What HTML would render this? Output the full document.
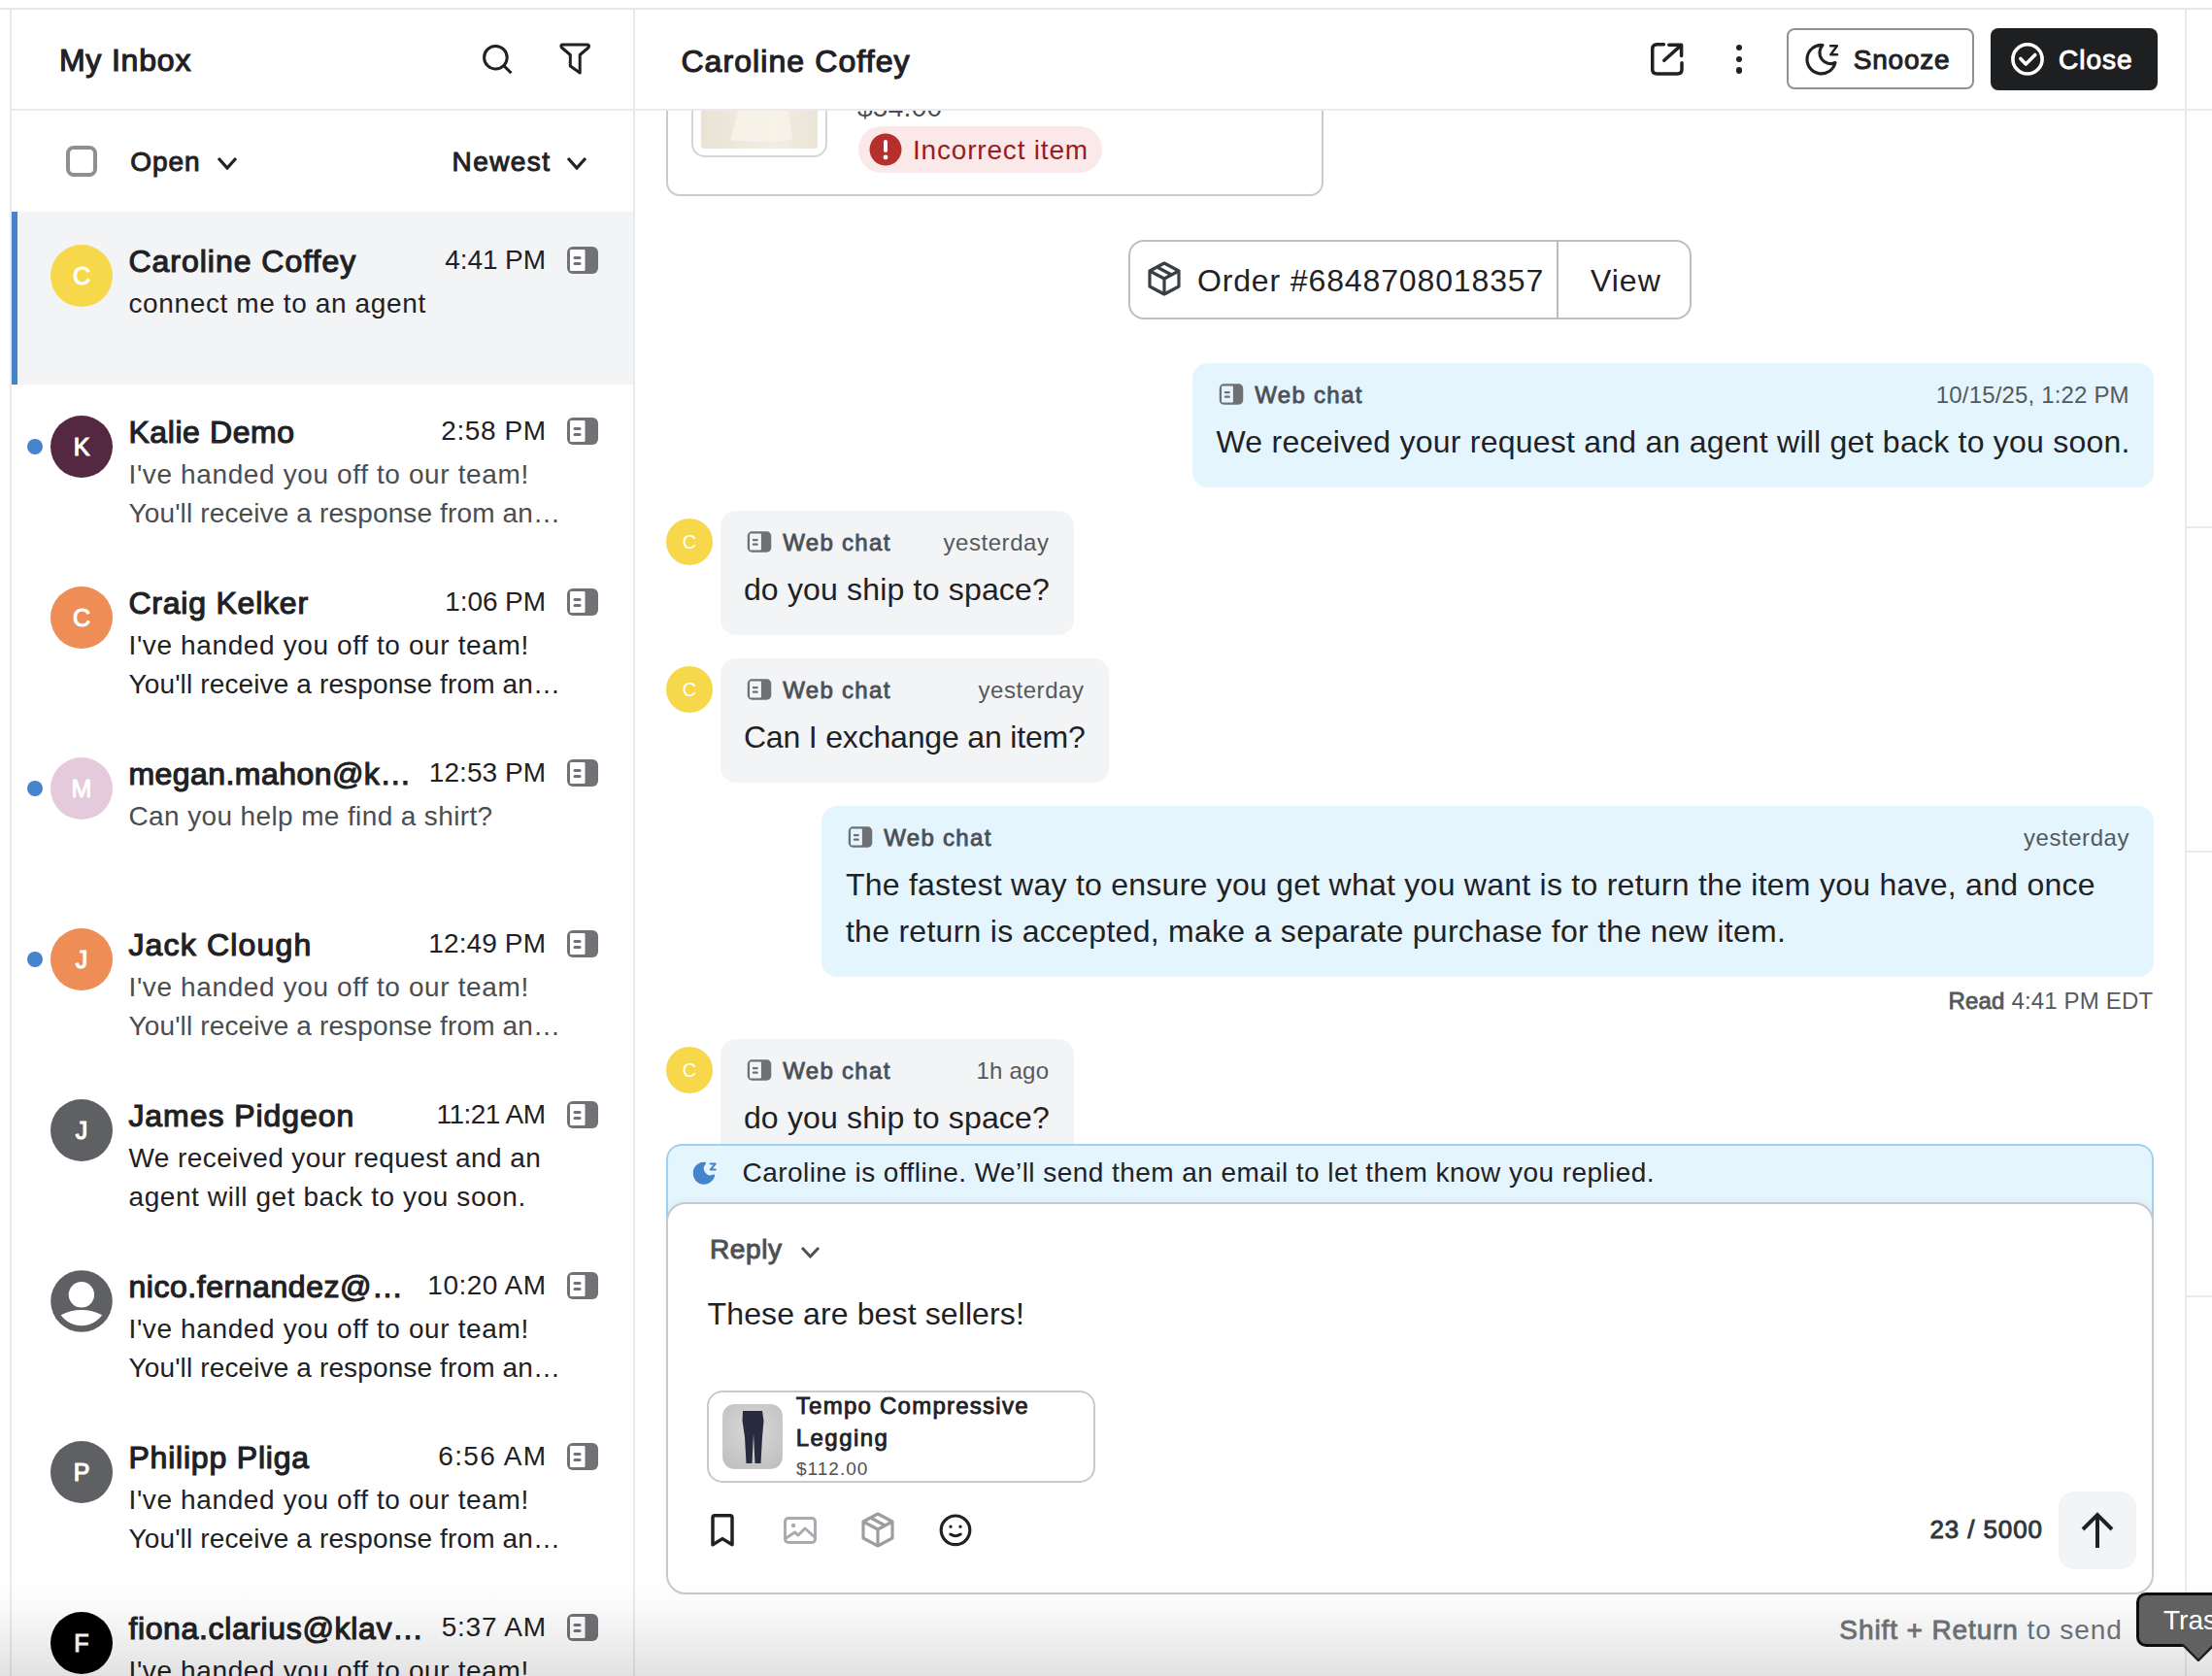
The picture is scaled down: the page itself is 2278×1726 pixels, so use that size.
<!DOCTYPE html>
<html><head><meta charset="utf-8"><style>
html,body{margin:0;padding:0;width:2278px;height:1726px;overflow:hidden;background:#fff;position:relative}
body{font-family:"Liberation Sans",sans-serif}
.a{position:absolute}
.t{position:absolute;white-space:nowrap;line-height:1}
.t b{font-weight:400;-webkit-text-stroke:0.86px currentColor}
.av{width:64px;height:64px;border-radius:50%;color:#fff;font-size:25px;font-weight:400;-webkit-text-stroke:1.1px #fff;text-align:center;line-height:65px}
.av2{width:48px;height:48px;border-radius:50%;background:#f7d84a;color:#fff;font-size:20px;font-weight:400;text-align:center;line-height:48px}
#chat{position:absolute;left:654px;top:114px;width:1596px;height:1612px;overflow:hidden}
#chatin{position:absolute;left:-654px;top:-114px;width:2278px;height:1726px}
</style></head><body>
<div class="a" style="left:0px;top:8px;width:2278px;height:2px;background:#e7e8ea"></div><div class="a" style="left:10px;top:10px;width:2px;height:1716px;background:#e9eaec"></div><div class="a" style="left:652px;top:10px;width:2px;height:1716px;background:#e9eaec"></div><div class="a" style="left:2250px;top:10px;width:2px;height:1716px;background:#e9eaec"></div><div class="a" style="left:12px;top:112px;width:2266px;height:2px;background:#e9eaec"></div><div class="a" style="left:2252px;top:542px;width:26px;height:2px;background:#e9eaec"></div><div class="a" style="left:2252px;top:876px;width:26px;height:2px;background:#e9eaec"></div><div class="a" style="left:2252px;top:1334px;width:26px;height:2px;background:#e9eaec"></div><div class="t" style="left:60.9px;top:45.7px;font-size:32px;font-weight:400;-webkit-text-stroke:1.15px #1f2124;color:#1f2124;letter-spacing:0.813px;">My Inbox</div><svg class="a" style="left:480px;top:35px;" width="60" height="50" viewBox="0 0 60 50"><circle cx="30.4" cy="24.2" r="11.8" fill="none" stroke="#1f2124" stroke-width="3"/><line x1="38.8" y1="32.6" x2="46.5" y2="40.3" stroke="#1f2124" stroke-width="3"/></svg><svg class="a" style="left:570px;top:35px;" width="44" height="50" viewBox="0 0 44 50"><path d="M9 11 H35 Q37.5 11.5 36 14 L27.2 21.5 V40 L17.3 33 V21.5 L8.5 14 Q7 11.5 9 11 Z" fill="none" stroke="#1f2124" stroke-width="3" stroke-linejoin="round"/></svg><div class="a" style="left:68px;top:150px;width:32px;height:32px;box-sizing:border-box;border:4px solid #8e8f91;border-radius:8px"></div><div class="t" style="left:134.3px;top:153.2px;font-size:28px;font-weight:400;-webkit-text-stroke:1.01px #1f2124;color:#1f2124;letter-spacing:0.960px;">Open</div><svg class="a" style="left:223px;top:161px;" width="22" height="14" viewBox="0 0 22 14"><polyline points="2,2 11.0,12 20,2" fill="none" stroke="#1f2124" stroke-width="3.2" stroke-linecap="butt" stroke-linejoin="miter"/></svg><div class="t" style="left:465.5px;top:152.8px;font-size:28px;font-weight:400;-webkit-text-stroke:1.01px #1f2124;color:#1f2124;letter-spacing:1.421px;">Newest</div><svg class="a" style="left:583px;top:161px;" width="22" height="14" viewBox="0 0 22 14"><polyline points="2,2 11.0,12 20,2" fill="none" stroke="#1f2124" stroke-width="3.2" stroke-linecap="butt" stroke-linejoin="miter"/></svg><div class="a" style="left:12px;top:218px;width:640px;height:178px;background:#f3f4f6"></div><div class="a" style="left:12px;top:218px;width:6px;height:178px;background:#4584cc"></div><div class="a av" style="left:52px;top:252px;background:#f7d84a">C</div><div class="t" style="left:132.4px;top:252.6px;font-size:32px;font-weight:400;-webkit-text-stroke:1.15px #1f2124;color:#1f2124;letter-spacing:0.989px;">Caroline Coffey</div><div class="t" style="right:1716.1px;top:254.3px;font-size:28px;font-weight:400;color:#1f2124;letter-spacing:-0.100px;">4:41 PM</div><svg class="a" style="left:583px;top:253px;" width="34" height="30" viewBox="0 0 34 30"><rect x="1" y="1" width="32" height="28" rx="6" fill="#717275"/><rect x="4" y="4" width="15.5" height="22" rx="1" fill="#ffffff"/><rect x="7.5" y="11" width="8" height="3" rx="1.5" fill="#717275"/><rect x="7.5" y="17" width="8" height="3" rx="1.5" fill="#717275"/></svg><div class="t" style="left:132.5px;top:299.1px;font-size:28px;font-weight:400;color:#1f2124;letter-spacing:0.620px;">connect me to an agent</div><div class="a" style="left:28px;top:452px;width:16px;height:16px;background:#4584cc;border-radius:50%"></div><div class="a av" style="left:52px;top:428px;background:#532840">K</div><div class="t" style="left:132.4px;top:428.6px;font-size:32px;font-weight:400;-webkit-text-stroke:1.15px #1f2124;color:#1f2124;letter-spacing:0.590px;">Kalie Demo</div><div class="t" style="right:1715.4px;top:430.3px;font-size:28px;font-weight:400;color:#1f2124;letter-spacing:0.566px;">2:58 PM</div><svg class="a" style="left:583px;top:429px;" width="34" height="30" viewBox="0 0 34 30"><rect x="1" y="1" width="32" height="28" rx="6" fill="#717275"/><rect x="4" y="4" width="15.5" height="22" rx="1" fill="#ffffff"/><rect x="7.5" y="11" width="8" height="3" rx="1.5" fill="#717275"/><rect x="7.5" y="17" width="8" height="3" rx="1.5" fill="#717275"/></svg><div class="t" style="left:132.5px;top:475.1px;font-size:28px;font-weight:400;color:#4c4d50;letter-spacing:0.621px;">I've handed you off to our team!</div><div class="t" style="left:132.5px;top:515.1px;font-size:28px;font-weight:400;color:#4c4d50;letter-spacing:0.132px;">You'll receive a response from an…</div><div class="a av" style="left:52px;top:604px;background:#ee8d55">C</div><div class="t" style="left:132.4px;top:604.6px;font-size:32px;font-weight:400;-webkit-text-stroke:1.15px #1f2124;color:#1f2124;letter-spacing:0.787px;">Craig Kelker</div><div class="t" style="right:1716.1px;top:606.3px;font-size:28px;font-weight:400;color:#1f2124;letter-spacing:-0.100px;">1:06 PM</div><svg class="a" style="left:583px;top:605px;" width="34" height="30" viewBox="0 0 34 30"><rect x="1" y="1" width="32" height="28" rx="6" fill="#717275"/><rect x="4" y="4" width="15.5" height="22" rx="1" fill="#ffffff"/><rect x="7.5" y="11" width="8" height="3" rx="1.5" fill="#717275"/><rect x="7.5" y="17" width="8" height="3" rx="1.5" fill="#717275"/></svg><div class="t" style="left:132.5px;top:651.1px;font-size:28px;font-weight:400;color:#1f2124;letter-spacing:0.621px;">I've handed you off to our team!</div><div class="t" style="left:132.5px;top:691.1px;font-size:28px;font-weight:400;color:#1f2124;letter-spacing:0.132px;">You'll receive a response from an…</div><div class="a" style="left:28px;top:804px;width:16px;height:16px;background:#4584cc;border-radius:50%"></div><div class="a av" style="left:52px;top:780px;background:#e5cadb">M</div><div class="t" style="left:132.4px;top:780.6px;font-size:32px;font-weight:400;-webkit-text-stroke:1.15px #1f2124;color:#1f2124;letter-spacing:0.451px;">megan.mahon@k…</div><div class="t" style="right:1715.9px;top:782.3px;font-size:28px;font-weight:400;color:#1f2124;letter-spacing:0.060px;">12:53 PM</div><svg class="a" style="left:583px;top:781px;" width="34" height="30" viewBox="0 0 34 30"><rect x="1" y="1" width="32" height="28" rx="6" fill="#717275"/><rect x="4" y="4" width="15.5" height="22" rx="1" fill="#ffffff"/><rect x="7.5" y="11" width="8" height="3" rx="1.5" fill="#717275"/><rect x="7.5" y="17" width="8" height="3" rx="1.5" fill="#717275"/></svg><div class="t" style="left:132.5px;top:827.1px;font-size:28px;font-weight:400;color:#4c4d50;letter-spacing:0.374px;">Can you help me find a shirt?</div><div class="a" style="left:28px;top:980px;width:16px;height:16px;background:#4584cc;border-radius:50%"></div><div class="a av" style="left:52px;top:956px;background:#ee8d55">J</div><div class="t" style="left:132.4px;top:956.6px;font-size:32px;font-weight:400;-webkit-text-stroke:1.15px #1f2124;color:#1f2124;letter-spacing:1.183px;">Jack Clough</div><div class="t" style="right:1715.9px;top:958.3px;font-size:28px;font-weight:400;color:#1f2124;letter-spacing:0.117px;">12:49 PM</div><svg class="a" style="left:583px;top:957px;" width="34" height="30" viewBox="0 0 34 30"><rect x="1" y="1" width="32" height="28" rx="6" fill="#717275"/><rect x="4" y="4" width="15.5" height="22" rx="1" fill="#ffffff"/><rect x="7.5" y="11" width="8" height="3" rx="1.5" fill="#717275"/><rect x="7.5" y="17" width="8" height="3" rx="1.5" fill="#717275"/></svg><div class="t" style="left:132.5px;top:1003.1px;font-size:28px;font-weight:400;color:#4c4d50;letter-spacing:0.621px;">I've handed you off to our team!</div><div class="t" style="left:132.5px;top:1043.1px;font-size:28px;font-weight:400;color:#4c4d50;letter-spacing:0.132px;">You'll receive a response from an…</div><div class="a av" style="left:52px;top:1132px;background:#5f6063">J</div><div class="t" style="left:132.4px;top:1132.6px;font-size:32px;font-weight:400;-webkit-text-stroke:1.15px #1f2124;color:#1f2124;letter-spacing:0.945px;">James Pidgeon</div><div class="t" style="right:1716.5px;top:1134.3px;font-size:28px;font-weight:400;color:#1f2124;letter-spacing:-0.536px;">11:21 AM</div><svg class="a" style="left:583px;top:1133px;" width="34" height="30" viewBox="0 0 34 30"><rect x="1" y="1" width="32" height="28" rx="6" fill="#717275"/><rect x="4" y="4" width="15.5" height="22" rx="1" fill="#ffffff"/><rect x="7.5" y="11" width="8" height="3" rx="1.5" fill="#717275"/><rect x="7.5" y="17" width="8" height="3" rx="1.5" fill="#717275"/></svg><div class="t" style="left:132.5px;top:1179.1px;font-size:28px;font-weight:400;color:#1f2124;letter-spacing:0.411px;">We received your request and an</div><div class="t" style="left:132.5px;top:1219.1px;font-size:28px;font-weight:400;color:#1f2124;letter-spacing:0.580px;">agent will get back to you soon.</div><svg class="a" style="left:52px;top:1308px;" width="64" height="64" viewBox="0 0 64 64"><circle cx="32" cy="32" r="31.8" fill="#5f6063"/><circle cx="31.9" cy="25.3" r="13.2" fill="#fff"/><path d="M10.7 46.2 A45.8 45.8 0 0 1 53.1 46.2 A25.8 25.8 0 0 1 10.7 46.2 Z" fill="#fff"/></svg><div class="t" style="left:132.4px;top:1308.6px;font-size:32px;font-weight:400;-webkit-text-stroke:1.15px #1f2124;color:#1f2124;letter-spacing:0.554px;">nico.fernandez@…</div><div class="t" style="right:1715.5px;top:1310.3px;font-size:28px;font-weight:400;color:#1f2124;letter-spacing:0.481px;">10:20 AM</div><svg class="a" style="left:583px;top:1309px;" width="34" height="30" viewBox="0 0 34 30"><rect x="1" y="1" width="32" height="28" rx="6" fill="#717275"/><rect x="4" y="4" width="15.5" height="22" rx="1" fill="#ffffff"/><rect x="7.5" y="11" width="8" height="3" rx="1.5" fill="#717275"/><rect x="7.5" y="17" width="8" height="3" rx="1.5" fill="#717275"/></svg><div class="t" style="left:132.5px;top:1355.1px;font-size:28px;font-weight:400;color:#1f2124;letter-spacing:0.621px;">I've handed you off to our team!</div><div class="t" style="left:132.5px;top:1395.1px;font-size:28px;font-weight:400;color:#1f2124;letter-spacing:0.132px;">You'll receive a response from an…</div><div class="a av" style="left:52px;top:1484px;background:#5f6063">P</div><div class="t" style="left:132.4px;top:1484.6px;font-size:32px;font-weight:400;-webkit-text-stroke:1.15px #1f2124;color:#1f2124;letter-spacing:0.801px;">Philipp Pliga</div><div class="t" style="right:1714.7px;top:1486.3px;font-size:28px;font-weight:400;color:#1f2124;letter-spacing:1.324px;">6:56 AM</div><svg class="a" style="left:583px;top:1485px;" width="34" height="30" viewBox="0 0 34 30"><rect x="1" y="1" width="32" height="28" rx="6" fill="#717275"/><rect x="4" y="4" width="15.5" height="22" rx="1" fill="#ffffff"/><rect x="7.5" y="11" width="8" height="3" rx="1.5" fill="#717275"/><rect x="7.5" y="17" width="8" height="3" rx="1.5" fill="#717275"/></svg><div class="t" style="left:132.5px;top:1531.1px;font-size:28px;font-weight:400;color:#1f2124;letter-spacing:0.621px;">I've handed you off to our team!</div><div class="t" style="left:132.5px;top:1571.1px;font-size:28px;font-weight:400;color:#1f2124;letter-spacing:0.132px;">You'll receive a response from an…</div><div class="a av" style="left:52px;top:1660px;background:#000000">F</div><div class="t" style="left:132.4px;top:1660.6px;font-size:32px;font-weight:400;-webkit-text-stroke:1.15px #1f2124;color:#1f2124;letter-spacing:0.638px;">fiona.clarius@klav…</div><div class="t" style="right:1715.3px;top:1662.3px;font-size:28px;font-weight:400;color:#1f2124;letter-spacing:0.741px;">5:37 AM</div><svg class="a" style="left:583px;top:1661px;" width="34" height="30" viewBox="0 0 34 30"><rect x="1" y="1" width="32" height="28" rx="6" fill="#717275"/><rect x="4" y="4" width="15.5" height="22" rx="1" fill="#ffffff"/><rect x="7.5" y="11" width="8" height="3" rx="1.5" fill="#717275"/><rect x="7.5" y="17" width="8" height="3" rx="1.5" fill="#717275"/></svg><div class="t" style="left:132.5px;top:1707.1px;font-size:28px;font-weight:400;color:#1f2124;letter-spacing:0.621px;">I've handed you off to our team!</div><div class="t" style="left:132.5px;top:1747.1px;font-size:28px;font-weight:400;color:#1f2124;letter-spacing:0.132px;">You'll receive a response from an…</div><div class="t" style="left:701.4px;top:46.9px;font-size:32px;font-weight:400;-webkit-text-stroke:1.15px #1f2124;color:#1f2124;letter-spacing:1.082px;">Caroline Coffey</div>
<div id="chat"><div id="chatin"><div class="a" style="left:686px;top:-40px;width:677px;height:242px;box-sizing:border-box;border:2px solid #c8ccd1;border-radius:14px;background:#fff"></div><div class="a" style="left:712px;top:0px;width:140px;height:162px;box-sizing:border-box;border:2px solid #d3d6d9;border-radius:14px;background:#fff"></div><div class="a" style="left:722px;top:0px;width:120px;height:153px;background:linear-gradient(90deg,#e9e3d6,#f2ede2 60%,#ebe5d8);border-radius:0 0 3px 3px"></div><svg class="a" style="left:722px;top:100px;" width="120" height="53" viewBox="0 0 120 53"><path d="M42 0 H88 L94 44 Q62 48 30 44 Z" fill="#f7f3e8" opacity="0.9"/></svg><div class="t" style="left:883.0px;top:97.3px;font-size:28px;font-weight:400;color:#4c4d50;letter-spacing:0.300px;">$54.00</div><div class="a" style="left:884px;top:130px;width:251px;height:48px;background:#fbe9e9;border-radius:24px"></div><svg class="a" style="left:895px;top:137px;" width="34" height="34" viewBox="0 0 34 34"><circle cx="17" cy="17" r="16.5" fill="#b5302d"/><rect x="15" y="7" width="4" height="13" rx="2" fill="#fff"/><circle cx="17" cy="25" r="2.4" fill="#fff"/></svg><div class="t" style="left:940.0px;top:140.9px;font-size:28px;font-weight:400;color:#9a1d1d;letter-spacing:0.813px;">Incorrect item</div><div class="a" style="left:1162px;top:247px;width:580px;height:82px;box-sizing:border-box;border:2px solid #b9bec4;border-radius:16px;background:#fff"></div><div class="a" style="left:1603px;top:247px;width:2px;height:82px;background:#b9bec4"></div><svg class="a" style="left:1180px;top:268px;" width="38" height="38" viewBox="0 0 38 38"><g fill="none" stroke="#3a3f45" stroke-width="3.2" stroke-linejoin="round"><path d="M19 3 L34 11 V27 L19 35 L4 27 V11 Z"/><path d="M4 11 L19 19 L34 11"/><path d="M19 19 V35"/><path d="M11.5 7 L26.5 15"/></g></svg><div class="t" style="left:1232.9px;top:272.9px;font-size:32px;font-weight:400;color:#1f2124;letter-spacing:0.872px;">Order #6848708018357</div><div class="t" style="left:1637.9px;top:272.9px;font-size:32px;font-weight:400;color:#1f2124;letter-spacing:1.046px;">View</div><div class="a" style="left:1228px;top:374px;width:990px;height:128px;background:#e4f5fd;border-radius:16px"></div><svg class="a" style="left:1255px;top:394px;" width="26" height="24" viewBox="0 0 34 30"><rect x="1" y="1" width="32" height="28" rx="6" fill="#6f7074"/><rect x="4" y="4" width="15.5" height="22" rx="1" fill="#e4f5fd"/><rect x="7.5" y="11" width="8" height="3" rx="1.5" fill="#6f7074"/><rect x="7.5" y="17" width="8" height="3" rx="1.5" fill="#6f7074"/></svg><div class="t" style="left:1292.2px;top:394.7px;font-size:24px;font-weight:400;-webkit-text-stroke:0.86px #4d5054;color:#4d5054;letter-spacing:1.312px;">Web chat</div><div class="t" style="right:85.3px;top:394.7px;font-size:24px;font-weight:400;color:#55595e;letter-spacing:0.162px;">10/15/25, 1:22 PM</div><div class="t" style="left:1252.5px;top:438.9px;font-size:32px;font-weight:400;color:#1f2124;letter-spacing:0.234px;">We received your request and an agent will get back to you soon.</div><div class="a av2" style="left:686px;top:534px">C</div><div class="a" style="left:742px;top:526px;width:364px;height:128px;background:#f3f4f6;border-radius:16px"></div><svg class="a" style="left:769px;top:546px;" width="26" height="24" viewBox="0 0 34 30"><rect x="1" y="1" width="32" height="28" rx="6" fill="#6f7074"/><rect x="4" y="4" width="15.5" height="22" rx="1" fill="#f3f4f6"/><rect x="7.5" y="11" width="8" height="3" rx="1.5" fill="#6f7074"/><rect x="7.5" y="17" width="8" height="3" rx="1.5" fill="#6f7074"/></svg><div class="t" style="left:806.2px;top:546.7px;font-size:24px;font-weight:400;-webkit-text-stroke:0.86px #4d5054;color:#4d5054;letter-spacing:1.312px;">Web chat</div><div class="t" style="right:1197.5px;top:546.7px;font-size:24px;font-weight:400;color:#55595e;letter-spacing:0.547px;">yesterday</div><div class="t" style="left:765.9px;top:590.9px;font-size:32px;font-weight:400;color:#1f2124;letter-spacing:0.180px;">do you ship to space?</div><div class="a av2" style="left:686px;top:686px">C</div><div class="a" style="left:742px;top:678px;width:400px;height:128px;background:#f3f4f6;border-radius:16px"></div><svg class="a" style="left:769px;top:698px;" width="26" height="24" viewBox="0 0 34 30"><rect x="1" y="1" width="32" height="28" rx="6" fill="#6f7074"/><rect x="4" y="4" width="15.5" height="22" rx="1" fill="#f3f4f6"/><rect x="7.5" y="11" width="8" height="3" rx="1.5" fill="#6f7074"/><rect x="7.5" y="17" width="8" height="3" rx="1.5" fill="#6f7074"/></svg><div class="t" style="left:806.2px;top:698.7px;font-size:24px;font-weight:400;-webkit-text-stroke:0.86px #4d5054;color:#4d5054;letter-spacing:1.312px;">Web chat</div><div class="t" style="right:1161.5px;top:698.7px;font-size:24px;font-weight:400;color:#55595e;letter-spacing:0.547px;">yesterday</div><div class="t" style="left:765.9px;top:742.9px;font-size:32px;font-weight:400;color:#1f2124;letter-spacing:-0.176px;">Can I exchange an item?</div><div class="a" style="left:846px;top:830px;width:1372px;height:176px;background:#e4f5fd;border-radius:16px"></div><svg class="a" style="left:873px;top:850px;" width="26" height="24" viewBox="0 0 34 30"><rect x="1" y="1" width="32" height="28" rx="6" fill="#6f7074"/><rect x="4" y="4" width="15.5" height="22" rx="1" fill="#e4f5fd"/><rect x="7.5" y="11" width="8" height="3" rx="1.5" fill="#6f7074"/><rect x="7.5" y="17" width="8" height="3" rx="1.5" fill="#6f7074"/></svg><div class="t" style="left:910.2px;top:850.7px;font-size:24px;font-weight:400;-webkit-text-stroke:0.86px #4d5054;color:#4d5054;letter-spacing:1.312px;">Web chat</div><div class="t" style="right:85.0px;top:850.7px;font-size:24px;font-weight:400;color:#55595e;letter-spacing:0.547px;">yesterday</div><div class="t" style="left:870.9px;top:894.9px;font-size:32px;font-weight:400;color:#1f2124;letter-spacing:0.252px;">The fastest way to ensure you get what you want is to return the item you have, and once</div><div class="t" style="left:870.9px;top:942.6px;font-size:32px;font-weight:400;color:#1f2124;letter-spacing:0.278px;">the return is accepted, make a separate purchase for the new item.</div><div class="t" style="right:60.8px;top:1018.9px;font-size:24px;font-weight:400;color:#55595e;letter-spacing:0.156px;"><b>Read</b> 4:41 PM EDT</div><div class="a av2" style="left:686px;top:1078px">C</div><div class="a" style="left:742px;top:1070px;width:364px;height:128px;background:#f3f4f6;border-radius:16px"></div><svg class="a" style="left:769px;top:1090px;" width="26" height="24" viewBox="0 0 34 30"><rect x="1" y="1" width="32" height="28" rx="6" fill="#6f7074"/><rect x="4" y="4" width="15.5" height="22" rx="1" fill="#f3f4f6"/><rect x="7.5" y="11" width="8" height="3" rx="1.5" fill="#6f7074"/><rect x="7.5" y="17" width="8" height="3" rx="1.5" fill="#6f7074"/></svg><div class="t" style="left:806.2px;top:1090.7px;font-size:24px;font-weight:400;-webkit-text-stroke:0.86px #4d5054;color:#4d5054;letter-spacing:1.312px;">Web chat</div><div class="t" style="right:1197.8px;top:1090.7px;font-size:24px;font-weight:400;color:#55595e;letter-spacing:0.207px;">1h ago</div><div class="t" style="left:765.9px;top:1134.9px;font-size:32px;font-weight:400;color:#1f2124;letter-spacing:0.180px;">do you ship to space?</div></div></div>
<div class="a" style="left:686px;top:1178px;width:1532px;height:120px;box-sizing:border-box;border:2px solid #9fd1f1;border-bottom:none;border-radius:16px 16px 0 0;background:#e4f5fd"></div><svg class="a" style="left:700px;top:1185px;" width="50" height="45" viewBox="0 0 50 45"><path d="M25.95 12.97 A10.29 10.29 0 1 0 35.05 25.57 A7.91 7.91 0 0 1 25.95 12.97 Z" fill="#4584cc" stroke="#4584cc" stroke-width="2.2" stroke-linejoin="round"/><path d="M31.6 13.6 H36.6 L31.8 19.4 H36.8" fill="none" stroke="#4584cc" stroke-width="2" stroke-linecap="round" stroke-linejoin="round"/></svg><div class="t" style="left:764.5px;top:1194.3px;font-size:28px;font-weight:400;color:#1f2124;letter-spacing:0.443px;">Caroline is offline. We’ll send them an email to let them know you replied.</div><div class="a" style="left:686px;top:1238px;width:1532px;height:404px;box-sizing:border-box;border:2px solid #c6cacf;border-radius:20px;background:#fff;box-shadow:0 -2px 6px rgba(0,0,0,0.04)"></div><div class="t" style="left:731.0px;top:1273.3px;font-size:28px;font-weight:400;-webkit-text-stroke:1.01px #4d5054;color:#4d5054;letter-spacing:0.597px;">Reply</div><svg class="a" style="left:824px;top:1283px;" width="21" height="13" viewBox="0 0 21 13"><polyline points="2,2 10.5,11 19,2" fill="none" stroke="#4d5054" stroke-width="3" stroke-linecap="butt" stroke-linejoin="miter"/></svg><div class="t" style="left:728.6px;top:1337.4px;font-size:32px;font-weight:400;color:#1f2124;letter-spacing:0.114px;">These are best sellers!</div><div class="a" style="left:728px;top:1432px;width:400px;height:95px;box-sizing:border-box;border:2px solid #c6cacf;border-radius:16px;background:#fff"></div><div class="a" style="left:744px;top:1446px;width:62px;height:67px;background:radial-gradient(circle at 50% 40%,#d9d9d9,#bdbdbd);border-radius:12px;border:1px solid #c9c9c9;box-sizing:border-box"></div><svg class="a" style="left:758px;top:1452px;" width="34" height="56" viewBox="0 0 34 56"><path d="M7 1 H27 L28.5 11 L27 28 L25.5 55 H19.5 L18 24 L16.5 55 H10.5 L9 28 L6.5 11 Z" fill="#262b3d"/></svg><div class="t" style="left:819.8px;top:1435.7px;font-size:24px;font-weight:400;-webkit-text-stroke:0.86px #1f2124;color:#1f2124;letter-spacing:1.249px;">Tempo Compressive</div><div class="t" style="left:819.8px;top:1468.7px;font-size:24px;font-weight:400;-webkit-text-stroke:0.86px #1f2124;color:#1f2124;letter-spacing:1.436px;">Legging</div><div class="t" style="left:819.9px;top:1502.9px;font-size:19px;font-weight:400;color:#4d5054;letter-spacing:1.043px;">$112.00</div><svg class="a" style="left:728px;top:1556px;" width="32" height="40" viewBox="0 0 30 38"><path d="M5.5 6.5 Q5.5 4.5 7.5 4.5 H22.5 Q24.5 4.5 24.5 6.5 V33 L15 27.2 L5.5 33 Z" fill="none" stroke="#1f2124" stroke-width="3.3" stroke-linejoin="round"/></svg><svg class="a" style="left:806px;top:1561px;" width="36" height="30" viewBox="0 0 36 30"><rect x="2.5" y="2.5" width="31" height="25" rx="3.5" fill="none" stroke="#a8abaf" stroke-width="3"/><circle cx="11" cy="10" r="2.2" fill="#a8abaf"/><path d="M3.5 23 L12.5 17 L16 20 L23 13 L33 22" fill="none" stroke="#a8abaf" stroke-width="3" stroke-linejoin="round"/></svg><svg class="a" style="left:885px;top:1556px;" width="38" height="40" viewBox="0 0 38 40"><g fill="none" stroke="#9c9ea1" stroke-width="3.2" stroke-linejoin="round"><path d="M19 3 L34 11 V28 L19 36 L4 28 V11 Z"/><path d="M4 11 L19 19 L34 11"/><path d="M19 19 V36"/><path d="M11.5 7 L26.5 15"/></g></svg><svg class="a" style="left:965px;top:1556px;" width="38" height="40" viewBox="0 0 38 40"><circle cx="19" cy="19.8" r="14.8" fill="none" stroke="#1f2124" stroke-width="3.2"/><circle cx="14" cy="16.2" r="1.6" fill="#1f2124"/><circle cx="24" cy="16.2" r="1.6" fill="#1f2124"/><path d="M13.8 24 Q19 27.5 24.2 24" fill="none" stroke="#1f2124" stroke-width="3" stroke-linecap="round"/></svg><div class="t" style="right:174.1px;top:1562.0px;font-size:26px;font-weight:400;-webkit-text-stroke:0.94px #30363c;color:#30363c;letter-spacing:0.890px;">23 / 5000</div><div class="a" style="left:2120px;top:1536px;width:80px;height:80px;background:#f3f4f6;border-radius:16px"></div><svg class="a" style="left:2140px;top:1554px;" width="40" height="44" viewBox="0 0 40 44"><path d="M20 40 V6 M5 21 L20 6 L35 21" fill="none" stroke="#1f2124" stroke-width="4" stroke-linejoin="miter"/></svg>
<svg class="a" style="left:1698px;top:42px;" width="42" height="42" viewBox="0 0 42 42"><g fill="none" stroke="#1f2124" stroke-width="3.5" stroke-linecap="round" stroke-linejoin="round"><path d="M15.4 3.75 H8.5 Q3.75 3.75 3.75 8.5 V29.5 Q3.75 34 8.5 34 H29.5 Q34 34 34 29.5 V22.8"/><path d="M20.8 4.2 H33.6 V15.4 M15.8 20.3 L33.2 4.6"/></g></svg><div class="a" style="left:1787.8px;top:45.699999999999996px;width:6.4px;height:6.4px;background:#1f2124;border-radius:50%"></div><div class="a" style="left:1787.8px;top:57.599999999999994px;width:6.4px;height:6.4px;background:#1f2124;border-radius:50%"></div><div class="a" style="left:1787.8px;top:69.39999999999999px;width:6.4px;height:6.4px;background:#1f2124;border-radius:50%"></div><div class="a" style="left:1840px;top:29px;width:193px;height:63px;box-sizing:border-box;border:2px solid #8f9194;border-radius:8px;background:#fff"></div><svg class="a" style="left:1850px;top:38px;" width="50" height="44" viewBox="0 0 50 44"><path d="M27 8.5 A14.7 14.7 0 1 0 40 26.5 A11.3 11.3 0 0 1 27 8.5 Z" fill="none" stroke="#1f2124" stroke-width="3.15" stroke-linejoin="round"/><path d="M35.1 9.3 H41.9 L35.3 18.2 H42.1" fill="none" stroke="#1f2124" stroke-width="2.4" stroke-linecap="round" stroke-linejoin="round"/></svg><div class="t" style="left:1908.8px;top:48.0px;font-size:28px;font-weight:400;-webkit-text-stroke:1.01px #1f2124;color:#1f2124;letter-spacing:0.782px;">Snooze</div><div class="a" style="left:2050px;top:29px;width:172px;height:64px;background:#1e1f21;border-radius:8px"></div><svg class="a" style="left:2060px;top:35px;" width="60" height="50" viewBox="0 0 60 50"><circle cx="28" cy="25.9" r="15.1" fill="none" stroke="#fff" stroke-width="3.6"/><path d="M20.9 25.4 L26.3 31 L35.8 21.5" fill="none" stroke="#fff" stroke-width="3.6" stroke-linecap="round" stroke-linejoin="round"/></svg><div class="t" style="left:2120.0px;top:48.0px;font-size:28px;font-weight:400;-webkit-text-stroke:1.01px #ffffff;color:#ffffff;letter-spacing:1.022px;">Close</div>
<div class="a" style="left:0px;top:1626px;width:2278px;height:100px;background:linear-gradient(to bottom,rgba(0,0,0,0),rgba(0,0,0,0.015) 25%,rgba(0,0,0,0.115))"></div><div class="t" style="right:92.4px;top:1665.0px;font-size:28px;font-weight:400;color:#6b6f73;letter-spacing:0.893px;"><b>Shift + Return</b> to send</div><div class="a" style="left:2200px;top:1640px;width:120px;height:56px;box-sizing:border-box;background:#616161;border:3px solid #0d0d0d;border-radius:10px"></div><svg class="a" style="left:2244px;top:1692px;" width="40" height="22" viewBox="0 0 40 22"><path d="M2 0 L20 18 L38 0" fill="#616161" stroke="#1d1d1d" stroke-width="2.4" stroke-linejoin="round"/></svg><div class="a" style="left:2246px;top:1690px;width:36px;height:3px;background:#616161"></div><div class="t" style="left:2228.0px;top:1655.3px;font-size:28px;font-weight:400;color:#ffffff;">Tras</div>
</body></html>
